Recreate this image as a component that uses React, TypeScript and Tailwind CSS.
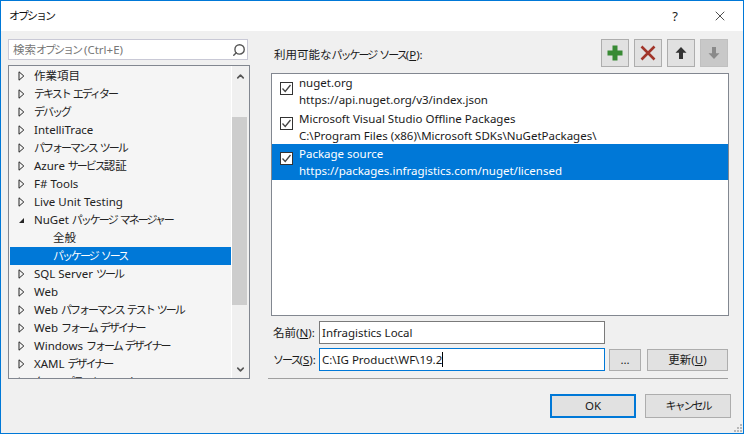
import React from 'react'
import { Search, X, ChevronUp, ChevronDown } from 'lucide-react'

const font = "font-['Noto_Sans','Noto_Sans_CJK_JP',sans-serif]"

type TreeItem = { label: string; open?: boolean; child?: boolean; selected?: boolean }

const tree: TreeItem[] = [
  { label: '作業項目' },
  { label: 'テキスト エディター' },
  { label: 'デバッグ' },
  { label: 'IntelliTrace' },
  { label: 'パフォーマンス ツール' },
  { label: 'Azure サービス認証' },
  { label: 'F# Tools' },
  { label: 'Live Unit Testing' },
  { label: 'NuGet パッケージ マネージャー', open: true },
  { label: '全般', child: true },
  { label: 'パッケージ ソース', child: true, selected: true },
  { label: 'SQL Server ツール' },
  { label: 'Web' },
  { label: 'Web パフォーマンス テスト ツール' },
  { label: 'Web フォーム デザイナー' },
  { label: 'Windows フォーム デザイナー' },
  { label: 'XAML デザイナー' },
  { label: 'クロス プラットフォーム' },
]

const sources = [
  { name: 'nuget.org', url: 'https://api.nuget.org/v3/index.json', row: 'h-[36px] pb-[2px]', check: 'mt-[8px]' },
  { name: 'Microsoft Visual Studio Offline Packages', url: 'C:\\Program Files (x86)\\Microsoft SDKs\\NuGetPackages\\', row: 'h-[34px]', check: 'mt-[7px]' },
  { name: 'Package source', url: 'https://packages.infragistics.com/nuget/licensed', row: 'h-[36px] pb-[1px]', check: 'mt-[8px]', selected: true },
]

// katakana in the dialog's UI font is much narrower than Noto's
function Jp({ text }: { text: string }) {
  return (
    <>
      {text.split(/([\u30a0-\u30ff]+)/).map((part, i) =>
        i % 2 === 1 ? (
          <span key={i} className="text-[11px] tracking-[-2px]">
            {part}
          </span>
        ) : (
          <span key={i}>{part}</span>
        ),
      )}
    </>
  )
}

function Arrow({ open }: { open?: boolean }) {
  if (open) {
    return (
      <svg width="7" height="7" viewBox="0 0 7 7" className="shrink-0">
        <path d="M6 1V6H1Z" fill="#262626" />
      </svg>
    )
  }
  return (
    <svg width="7" height="10" viewBox="0 0 7 10" className="shrink-0">
      <path d="M1 .8V9.2L5.8 5Z" fill="none" stroke="#262626" />
    </svg>
  )
}

function TreeRow({ item }: { item: TreeItem }) {
  return (
    <div className={`h-[18px] shrink-0 flex items-center whitespace-nowrap ${item.selected ? 'bg-[#0078d7] text-white' : 'text-[#222]'}`}>
      <div className="w-[8px] shrink-0" />
      {!item.child && <Arrow open={item.open} />}
      <span className={item.child ? 'ml-[35px]' : 'ml-[9px]'}>
        <Jp text={item.label} />
      </span>
    </div>
  )
}

function Check({ className }: { className: string }) {
  return (
    <div className={`w-[13px] h-[13px] shrink-0 self-start border border-[#333] bg-white flex items-center justify-center ${className}`}>
      <svg width="11" height="11" viewBox="0 0 11 11">
        <path d="M1.5 5.5L4.2 8.5L9.5 2" fill="none" stroke="#444" strokeWidth="1.3" />
      </svg>
    </div>
  )
}

function ToolButton({ children, disabled }: { children: React.ReactNode; disabled?: boolean }) {
  return (
    <div className={`w-[28px] h-[28px] border flex items-center justify-center ${disabled ? 'bg-[#c8c8c8] border-[#c0c0c0]' : 'bg-[#e1e1e1] border-[#adadad]'}`}>
      {children}
    </div>
  )
}

function Underlined({ before, k, after = '' }: { before: string; k: string; after?: string }) {
  return (
    <>
      <Jp text={before} />(<span className="underline">{k}</span>){after}
    </>
  )
}

export default function App() {
  return (
    <div className={`${font} w-[744px] h-[434px] relative flex flex-col border border-[#0078d7] bg-[#f0f0f0] text-[11.5px] leading-[16px] text-[#1a1a1a] overflow-hidden`}>
      <div className="h-[30px] shrink-0 bg-white flex items-center pl-[8px]">
        <span className="text-[#111] flex-1">
          <Jp text="オプション" />
        </span>
        <span className="w-[46px] text-center text-[13px] mr-[14px]">?</span>
        <X className="w-[16px] h-[16px] mr-[15px] text-[#222]" strokeWidth={1.2} />
      </div>

      <div className="flex-1 min-h-0 flex pl-[7px] pt-[8px] pr-[14px]">
        <div className="w-[242px] shrink-0 flex flex-col">
          <div className="h-[21px] w-[240px] border border-[#c9c9d6] bg-white flex items-center pl-[4px] pr-[1px] shrink-0">
            <span className="flex-1 text-[#777]">
              <Jp text="検索オプション (Ctrl+E)" />
            </span>
            <Search className="w-[14px] h-[14px] text-[#555] -scale-x-100" strokeWidth={2.4} />
          </div>
          <div className="mt-[5px] h-[314px] border border-[#828790] bg-[#f5f5f5] flex overflow-hidden">
            <div className="flex-1 min-w-0 flex flex-col pt-[1px] pl-[1px] overflow-hidden">
              {tree.map((item) => (
                <TreeRow key={item.label} item={item} />
              ))}
            </div>
            <div className="w-[18px] shrink-0 bg-[#f0f0f0] border-l border-white flex flex-col">
              <div className="h-[17px] mt-[2px] flex items-center justify-center">
                <ChevronUp className="w-[11px] h-[11px] text-[#555]" strokeWidth={3.5} />
              </div>
              <div className="h-[32px]" />
              <div className="h-[188px] w-[15px] bg-[#cdcdcd]" />
              <div className="flex-1" />
              <div className="h-[17px] flex items-center justify-center">
                <ChevronDown className="w-[11px] h-[11px] text-[#555]" strokeWidth={3.5} />
              </div>
            </div>
          </div>
        </div>

        <div className="flex-1 min-w-0 ml-[21px] flex flex-col">
          <div className="h-[28px] shrink-0 flex items-center">
            <span className="flex-1 pl-[3px] pt-[4px]">
              <Underlined before="利用可能なパッケージ ソース" k="P" after=":" />
            </span>
            <div className="flex gap-[5px] mr-[1px]">
              <ToolButton>
                <svg width="18" height="18" viewBox="0 0 18 18">
                  <path d="M6.5 1.5H11.5V6.5H16.5V11.5H11.5V16.5H6.5V11.5H1.5V6.5H6.5Z" fill="#388a34" />
                </svg>
              </ToolButton>
              <ToolButton>
                <svg width="18" height="18" viewBox="0 0 18 18">
                  <path d="M2.5 2.5L15.5 15.5M15.5 2.5L2.5 15.5" stroke="#a1352a" strokeWidth="2.6" />
                </svg>
              </ToolButton>
              <ToolButton>
                <svg width="14" height="14" viewBox="0 0 14 14">
                  <path d="M7 1L12.5 6.8H9V13H5V6.8H1.5Z" fill="#333" />
                </svg>
              </ToolButton>
              <ToolButton disabled>
                <svg width="14" height="14" viewBox="0 0 14 14">
                  <path d="M7 13L12.5 7.2H9V1H5V7.2H1.5Z" fill="#8a8a8a" />
                </svg>
              </ToolButton>
            </div>
          </div>

          <div className="mt-[6px] h-[243px] border border-[#828790] bg-white flex flex-col shrink-0">
            {sources.map((s) => (
              <div key={s.name} className={`${s.row} shrink-0 flex items-center pl-[8px] ${s.selected ? 'bg-[#0078d7] text-white' : 'text-[#1a1a1a]'}`}>
                <Check className={s.check} />
                <div className="ml-[6px] flex flex-col leading-[17px] whitespace-nowrap">
                  <span>{s.name}</span>
                  <span>{s.url}</span>
                </div>
              </div>
            ))}
          </div>

          <div className="mt-[5px] h-[23px] flex items-center shrink-0">
            <span className="w-[48px] pl-[2px]">
              <Underlined before="名前" k="N" after=":" />
            </span>
            <div className="w-[286px] h-[23px] border border-[#7a7a7a] bg-white pl-[2px] flex items-center">Infragistics Local</div>
          </div>

          <div className="mt-[4px] h-[23px] flex items-center shrink-0">
            <span className="w-[48px] pl-[2px] whitespace-nowrap">
              <Underlined before="ソース" k="S" after=":" />
            </span>
            <div className="w-[286px] h-[23px] border border-[#0078d7] bg-white pl-[2px] flex items-center">
              C:\IG Product\WF\19.2<span className="w-[1px] h-[15px] bg-black" />
            </div>
            <div className="ml-[4px] w-[32px] h-[22px] border border-[#adadad] bg-[#e1e1e1] flex items-center justify-center">...</div>
            <div className="ml-[6px] w-[81px] h-[22px] border border-[#adadad] bg-[#e1e1e1] flex items-center justify-center">
              <Underlined before="更新" k="U" />
            </div>
          </div>

          <div className="mt-[7px] h-[1px] -ml-[3px] mr-[1px] bg-[#a0a0a0] shrink-0" />

          <div className="mt-[15px] flex justify-end -mr-[2px] gap-[9px]">
            <div className="w-[86px] h-[24px] border-2 border-[#0078d7] bg-[#e1e1e1] flex items-center justify-center">OK</div>
            <div className="w-[86px] h-[24px] border border-[#adadad] bg-[#e1e1e1] flex items-center justify-center">
              <Jp text="キャンセル" />
            </div>
          </div>
        </div>
      </div>

      <svg width="10" height="10" viewBox="0 0 10 10" className="absolute right-0 bottom-0">
        <path d="M7 1h2v2H7zM4 4h2v2H4zM7 4h2v2H7zM1 7h2v2H1zM4 7h2v2H4zM7 7h2v2H7z" fill="#b8b8b8" />
      </svg>
    </div>
  )
}
